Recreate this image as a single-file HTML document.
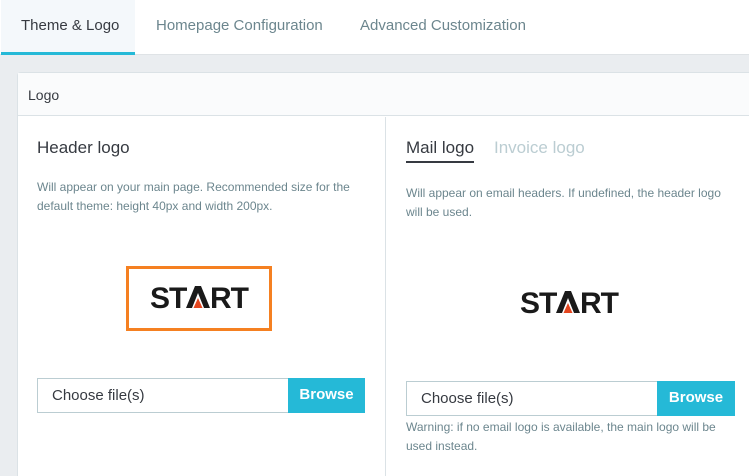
<!DOCTYPE html>
<html style="overflow:hidden;height:476px"><head><style>
*{margin:0;padding:0;box-sizing:border-box}
body{width:749px;height:476px;overflow:hidden;background:#eaedf0;font-family:"Liberation Sans",sans-serif;position:relative}
.a{position:absolute;white-space:nowrap}
.tabs{position:absolute;left:0;top:0;width:749px;height:55px;background:#fff;border-bottom:1px solid #dfe3e6}
.inp{position:absolute;height:35px;border:1px solid #bbcdd2;background:#fff;font-size:15px;color:#363a41;padding:8px 14px}
.btn{position:absolute;height:35px;background:#25b9d7;color:#fff;font-weight:bold;font-size:15px;text-align:center;line-height:34px}
.small{font-size:12px;color:#6c868e;line-height:19px}
</style></head><body>
<div class="tabs"></div>
<div class="a" style="left:1px;top:0;width:134px;height:55px;background:#f4f8fb;border-bottom:3px solid #25b9d7"></div>
<div class="a" style="left:21px;top:17px;font-size:15px;color:#363a41">Theme &amp; Logo</div>
<div class="a" style="left:156px;top:17px;font-size:15px;color:#6c868e">Homepage Configuration</div>
<div class="a" style="left:360px;top:17px;font-size:15px;color:#6c868e">Advanced Customization</div>

<div class="a" style="left:17px;top:72px;width:732px;height:404px;background:#fff;border:1px solid #dbe2e6;border-bottom:none;border-right:none;border-radius:4px 0 0 0"></div>
<div class="a" style="left:18px;top:73px;width:731px;height:43px;background:#fafbfc;border-bottom:1px solid #dbe2e6"></div>
<div class="a" style="left:28px;top:87px;font-size:14px;color:#363a41">Logo</div>
<div class="a" style="left:385px;top:117px;width:1px;height:359px;background:#dbe2e6"></div>

<div class="a" style="left:37px;top:138px;font-size:17px;color:#363a41">Header logo</div>
<div class="a small" style="left:37px;top:178px">Will appear on your main page. Recommended size for the<br>default theme: height 40px and width 200px.</div>
<div class="a" style="left:126px;top:266px;width:146px;height:65px;border:3px solid #f58021"></div>
<svg class="a" style="left:150px;top:286px" width="102" height="24" viewBox="0 0 102 24">
<text x="0" y="22" font-family="Liberation Sans" font-weight="bold" font-size="30" fill="#1a1a1a" letter-spacing="-1">ST</text>
<polygon points="36,22 45,0 51,0 60,22 54,22 48,7 42,22" fill="#1a1a1a"/>
<polygon points="43.5,22 48,12 52.5,22" fill="#e4461f"/>
<text x="60" y="22" font-family="Liberation Sans" font-weight="bold" font-size="30" fill="#1a1a1a" letter-spacing="-1">RT</text>
</svg>
<div class="inp" style="left:37px;top:378px;width:252px">Choose file(s)</div>
<div class="btn" style="left:288px;top:378px;width:77px">Browse</div>

<div class="a" style="left:406px;top:138px;font-size:17px;color:#363a41">Mail logo</div>
<div class="a" style="left:406px;top:161px;width:68px;height:2px;background:#363a41"></div>
<div class="a" style="left:494px;top:138px;font-size:17px;color:#bbcdd2">Invoice logo</div>
<div class="a small" style="left:406px;top:184px">Will appear on email headers. If undefined, the header logo<br>will be used.</div>
<svg class="a" style="left:520px;top:291px" width="102" height="24" viewBox="0 0 102 24">
<text x="0" y="22" font-family="Liberation Sans" font-weight="bold" font-size="30" fill="#1a1a1a" letter-spacing="-1">ST</text>
<polygon points="36,22 45,0 51,0 60,22 54,22 48,7 42,22" fill="#1a1a1a"/>
<polygon points="43.5,22 48,12 52.5,22" fill="#e4461f"/>
<text x="60" y="22" font-family="Liberation Sans" font-weight="bold" font-size="30" fill="#1a1a1a" letter-spacing="-1">RT</text>
</svg>
<div class="inp" style="left:406px;top:381px;width:252px">Choose file(s)</div>
<div class="btn" style="left:657px;top:381px;width:78px">Browse</div>
<div class="a small" style="left:406px;top:418px">Warning: if no email logo is available, the main logo will be<br>used instead.</div>
</body></html>
